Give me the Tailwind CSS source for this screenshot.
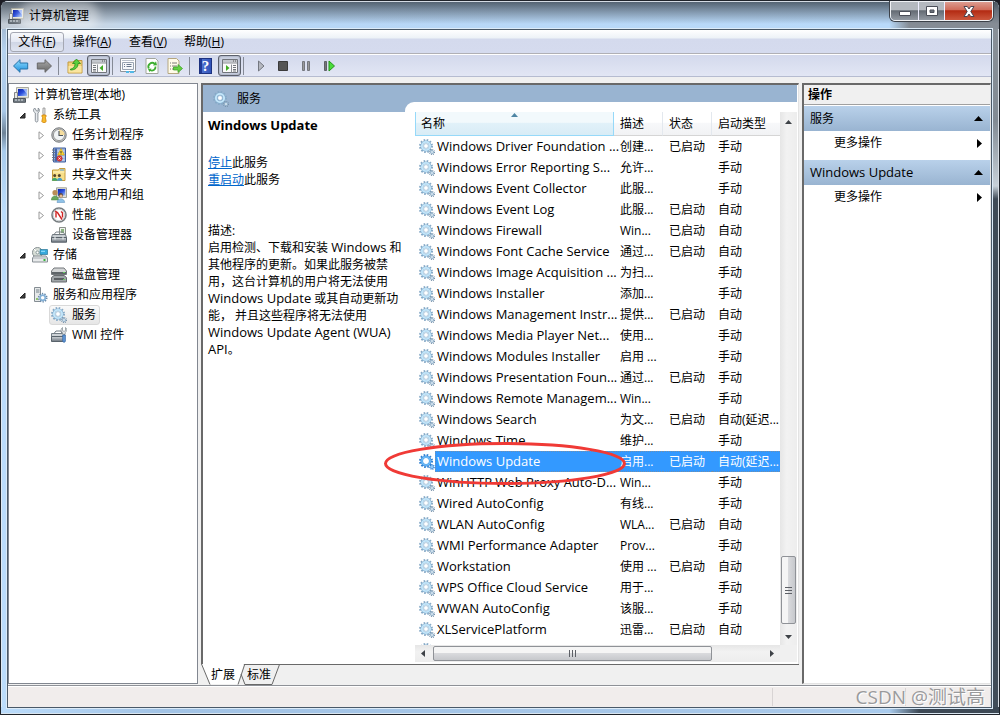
<!DOCTYPE html>
<html lang="zh-CN">
<head>
<meta charset="utf-8">
<title>计算机管理</title>
<script src="https://cdn.jsdelivr.net/npm/@tailwindcss/browser@4"></script>
</head>
<body class="h-screen overflow-hidden bg-[#1c1c24] font-['Open_Sans','Noto_Sans_CJK_SC',sans-serif] text-xs text-black">

<svg class="absolute size-0" aria-hidden="true">
  <defs>
    <linearGradient id="g-scr" x1="0" y1="0" x2="1" y2="1"><stop offset="0" stop-color="#0a1fa8"/><stop offset=".5" stop-color="#2c50dc"/><stop offset="1" stop-color="#a8c8f8"/></linearGradient>
    <linearGradient id="g-blue" x1="0" y1="0" x2="0" y2="1"><stop offset="0" stop-color="#8fdcff"/><stop offset="1" stop-color="#1d8fdd"/></linearGradient>
    <linearGradient id="g-gray" x1="0" y1="0" x2="0" y2="1"><stop offset="0" stop-color="#aaa"/><stop offset="1" stop-color="#666"/></linearGradient>
    <linearGradient id="g-box" x1="0" y1="0" x2="0" y2="1"><stop offset="0" stop-color="#d2d6da"/><stop offset="1" stop-color="#6c757e"/></linearGradient>
  </defs>
  <symbol id="gears" viewBox="0 0 16 16">
    <circle cx="7" cy="7" r="6" fill="none" stroke="#86a9c6" stroke-width="2" stroke-dasharray="1.6 1.54"/>
    <circle cx="7" cy="7" r="4.2" fill="none" stroke="#86b0d0" stroke-width="2.6"/>
    <circle cx="7" cy="7" r="4.1" fill="none" stroke="#c3e6fa" stroke-width="1.9"/>
    <circle cx="7" cy="7" r="2.4" fill="#fff" stroke="#7fa9cb" stroke-width=".6"/>
    <circle cx="13" cy="13" r="2.5" fill="none" stroke="#7892aa" stroke-width="1.2" stroke-dasharray="1 .96"/>
    <circle cx="13" cy="13" r="1.5" fill="#e4f0f8" stroke="#90b0ca" stroke-width="1"/>
  </symbol>
  <symbol id="gears-sel" viewBox="0 0 16 16">
    <circle cx="7" cy="7" r="6" fill="none" stroke="#2f7fd0" stroke-width="2" stroke-dasharray="1.6 1.54"/>
    <circle cx="7" cy="7" r="4.2" fill="none" stroke="#3b8fe0" stroke-width="2.6"/>
    <circle cx="7" cy="7" r="4.1" fill="none" stroke="#70bdf8" stroke-width="1.5"/>
    <circle cx="7" cy="7" r="2.4" fill="#fff"/>
    <circle cx="13" cy="13" r="2.1" fill="#8ec8fa" stroke="#2f7fd0" stroke-width="1.4" stroke-dasharray="1 .7"/>
  </symbol>
  <symbol id="computer" viewBox="0 0 16 16">
    <path d="M3.5.5h12v10.3h-12z" fill="#e4e5dc" stroke="#a9a99e"/>
    <path d="M5 2h9v7H5z" fill="url(#g-scr)"/><path d="M10 2h4v5z" fill="#c7dcff" opacity=".7"/>
    <path d="M1.5 5.500h3v6h-3z" fill="#e7e8e2" stroke="#85878a"/>
    <path d="M.5 11.500h12v3.800H.5z" fill="#717a82" stroke="#4e555c"/><path d="M2 13h2m1 0h2m1 0h2" stroke="#e0e6ea"/>
  </symbol>
  <symbol id="tools" viewBox="0 0 16 16">
    <path d="M2.800 1C1.300 2 1 4.200 2.600 5.500L3.300 6v7.500c0 2 2.600 2 2.600 0V6c2-1.300 1.900-3.800.300-5v3H4.500z" fill="#e9ecef" stroke="#808890" stroke-width=".9"/>
    <path d="M11 1h2v5l-.400 1.500h-1.300L10.800 6z" fill="#e4e4e4" stroke="#888" stroke-width=".7"/>
    <path d="M10 8h4v2l-.600.600.800 3.900c-.800 1.500-3.800 1.500-4.400 0l.800-3.900L10 10z" fill="#f8ba2b" stroke="#ce8310" stroke-width=".8"/>
  </symbol>
  <symbol id="clock" viewBox="0 0 16 16">
    <circle cx="8" cy="8" r="7.2" fill="#c2c4c4" stroke="#74787b"/><circle cx="8" cy="8" r="5.6" fill="#f1f4f5" stroke="#999"/>
    <path d="M8 8V2.400A5.600 5.600 0 0 1 13.600 8z" fill="#f5dd9e"/><path d="M8 4v4.500h4" fill="none" stroke="#4a535b" stroke-width="1.1"/>
  </symbol>
  <symbol id="event" viewBox="0 0 16 16">
    <path d="M2.500 1h12v14h-12z" fill="#9bb3dc" stroke="#3e5f9f"/><path d="M4 1.500h2v13H4z" fill="#4467ae"/>
    <path d="M6.500 4h7m-7 3h7m-7 3h7m-7 3h7" stroke="#dbe7f8"/><path d="M1 3h3M1 5.500h3M1 8h3m-3 2.500h3M1 13h3" stroke="#6c7683"/>
    <path d="M10 1.500 13.400 8H6.700z" fill="#ffdb32" stroke="#c99a08" stroke-width=".6"/><path d="M10 4v2.200m0 .500v.600" stroke="#333"/>
    <circle cx="8.500" cy="11.500" r="2.700" fill="#dd3c3c" stroke="#a81d22" stroke-width=".5"/><path d="m7.500 10.500 2 2m0-2-2 2" stroke="#fff" stroke-width=".8"/>
  </symbol>
  <symbol id="share" viewBox="0 0 16 16">
    <path d="M1.500 3h6l1-1.500h5.500v12H1.500z" fill="#f7df89" stroke="#c59d3c"/><path d="M9 3h4" stroke="#4b9be0"/><path d="M2 5h11.500" stroke="#fff3bf"/>
    <circle cx="3.700" cy="8.500" r="1.500" fill="#57452a"/><circle cx="8.300" cy="8.500" r="1.500" fill="#57452a"/>
    <path d="M.800 13.800c.500-4 5.200-4 5.700 0z" fill="#42a76a"/><path d="M5.800 13.800c.500-4 5.200-4 5.700 0z" fill="#4a9ec9"/>
  </symbol>
  <symbol id="users" viewBox="0 0 16 16">
    <path d="M5.500.800h10v9.700h-10z" fill="#e2e2da" stroke="#a5a59b"/><path d="M6.800 2h7.500v6.500H6.800z" fill="url(#g-scr)"/>
    <circle cx="4" cy="5.700" r="2.600" fill="#b98d56"/><path d="M.300 13c.300-5.500 7-5.500 7.400 0z" fill="#69a75d" stroke="#48833f" stroke-width=".5"/>
    <circle cx="9.700" cy="8.300" r="2.300" fill="#5b4a40"/><circle cx="10" cy="9" r="1.600" fill="#e7b98f"/><path d="M6 15.500c.300-5 7.300-5 7.700 0z" fill="#8fc2e8" stroke="#568db8" stroke-width=".5"/>
  </symbol>
  <symbol id="perf" viewBox="0 0 16 16">
    <circle cx="8" cy="8" r="7" fill="#fff" stroke="#777d80" stroke-width="1.600"/><circle cx="8" cy="8" r="5.700" fill="none" stroke="#cdd1d3"/>
    <path d="m4 4 2.500 1.500 4.500 7M5 10.500V5.200m5-.700 1.500 1.300v4.700" fill="none" stroke="#cf2424" stroke-width="1.400"/>
  </symbol>
  <symbol id="device" viewBox="0 0 16 16">
    <path d="M8.500.500h6v9h-6z" fill="#f0f2ef" stroke="#8a9089"/><path d="M10 2h3v4h-3z" fill="#8ab67c"/>
    <path d="M3 7.500 5 5h7l2 2.500" fill="none" stroke="#7d858b"/><path d="M1.500 7.500h13l1 3H.500z" fill="#c7cdd1" stroke="#727a81"/>
    <path d="M.500 10.500h15v4.700H.500z" fill="url(#g-box)" stroke="#59626a"/><path d="M4 9.500v3m8-3v3" stroke="#edf1f3"/>
  </symbol>
  <symbol id="storage" viewBox="0 0 16 16">
    <circle cx="5.500" cy="5.500" r="5" fill="#d8ded7" stroke="#858e91"/><path d="M5.500 5.500 2 2m3.500 3.500L9 2" stroke="#fff"/><circle cx="5.500" cy="5.500" r="1.500" fill="#fff" stroke="#899"/>
    <path d="M8 2.500h7.500v5H8z" fill="#38a9dc" stroke="#287797" stroke-width=".7"/><path d="M9 4.300h4" stroke="#9be3ff"/>
    <path d="M2 9h12l1.500 2v4h-15v-4z" fill="#e8eaeb" stroke="#899095"/><path d="M1 11h14" stroke="#aab0b5"/><path d="M11.500 12h2v2h-2z" fill="#37b43c"/>
  </symbol>
  <symbol id="disk" viewBox="0 0 16 16">
    <path d="M3 1h10l2.500 3v3.500H.500V4z" fill="#d3d5d6" stroke="#73777a"/><path d="M1 5h14v2H1z" fill="#5f6569"/>
    <path d="M3 8.500h10l2.500 2V15H.500v-4.500z" fill="#a0a5a8" stroke="#686d70"/><path d="M3 12h10" stroke="#44494c" stroke-width="1.500"/><path d="M12 5h2v1h-2zm0 7h2v1h-2z" fill="#64cf5e"/>
  </symbol>
  <symbol id="server" viewBox="0 0 16 16">
    <path d="M2.500.500h6v14h-6z" fill="#e6e9e9" stroke="#858d93"/><path d="M4 3h3.500M4 5h3.500" stroke="#75818a"/><path d="M4 11h2v2H4z" fill="#91c46f"/>
    <circle cx="10.700" cy="10.700" r="4" fill="none" stroke="#6989a8" stroke-width="1.700" stroke-dasharray="1.300 1.210"/><circle cx="10.700" cy="10.700" r="2.600" fill="#fff" stroke="#83b1d8" stroke-width="1.700"/>
  </symbol>
  <symbol id="wmi" viewBox="0 0 16 16">
    <path d="M3 6.500 5 4h5l1 2.500" fill="none" stroke="#707a82"/><path d="M.500 6.500h13v3H.500z" fill="#cdd2d6" stroke="#737d85"/><path d="M.500 9.500h13v5H.500z" fill="url(#g-box)" stroke="#59636b"/>
    <path d="M11.500.500v3l1.500 1 1.500-1v-3c2 1.500 1.400 4-.300 4.800v2h-2.500v-2C9.800 4.500 9.500 2 11.500.500z" fill="#eef0f1" stroke="#7d868c" stroke-width=".7"/>
    <path d="M11.700 8h2.700v6c0 1.700-2.700 1.700-2.700 0z" fill="#5f97d7" stroke="#3566a0" stroke-width=".7"/>
  </symbol>
  <symbol id="pane-l" viewBox="0 0 16 16">
    <path d="M.500 1.500h15v13H.500z" fill="#fafafa" stroke="#71757b"/><path d="M1 2h14v2.500H1z" fill="#c3c7cd"/><path d="M1 5h14M6.500 6.500v8" stroke="#8a8f95"/><path d="M11 3h1m1 0h1" stroke="#555"/>
    <path d="M2 7.500h3M2 9.500h3M2 11.500h3M2 13h3" stroke="#72777d"/><path d="M12 7v6L8.500 10z" fill="#40ac22"/>
  </symbol>
  <symbol id="pane-r" viewBox="0 0 16 16">
    <path d="M.500 1.500h15v13H.500z" fill="#fafafa" stroke="#71757b"/><path d="M1 2h14v2.500H1z" fill="#c3c7cd"/><path d="M1 5h14M9.500 6.500v8" stroke="#8a8f95"/><path d="M11 3h1m1 0h1" stroke="#555"/>
    <path d="M11 7.500h3m-3 2h3m-3 2h3m-3 1.500h3" stroke="#72777d"/><path d="M4 7v6l3.500-3z" fill="#40ac22"/>
  </symbol>
</svg>

<div class="relative flex h-full flex-col overflow-hidden rounded-t-lg border border-[#20242b] bg-[#a9cbec] bg-[linear-gradient(180deg,#8fa0b4_0,#b6d2ef_50px,#a9c8e8_110px,#6e8398_132px,#a9cbec_150px,#bbdcfb_210px,#bbdcfb_100%)] pr-[7px] pb-[6px] pl-[6px] shadow-[inset_0_0_0_1px_#dfe9f2]">
  <div class="absolute top-0 right-0 bottom-0 w-2 border-r border-[#d7dde4] bg-[linear-gradient(180deg,#8b9299_0,#828b94_120px,#c7d0d8_185px,#3f4b57_198px,#414d59_100%)]"></div>
  <div class="absolute right-0 bottom-0 left-0 h-[7px] border-b border-[#d9e5ef] bg-[linear-gradient(90deg,#bbdcfb_0,#a2c3e5_160px,#a8c8e9_80%,#a9cbed_89%,#3d4955_92%)]"></div>

  <header class="relative -mr-[7px] -ml-[6px] flex h-[28px] shrink-0 items-center border-t border-[#d4dbe4] bg-[linear-gradient(180deg,#3b4651cc_0,#4f5b6899_8px,#82a0c000_22px),linear-gradient(90deg,#c3ccd6_0,#c7d6e5_100px,#b7d6f5_170px,#b9dafa_89%,#858c95_91%)] pl-[7px]">
    <svg class="size-4"><use href="#computer"/></svg>
    <h1 class="ml-[3px] rounded-full bg-white/40 px-[2px] shadow-[0_0_9px_8px_#ffffff66]">计算机管理</h1>
    <div class="absolute -top-px right-[6px] flex h-5 overflow-hidden rounded-b-[5px] border border-[#f0f2f5] shadow-[0_0_0_1px_#3c4149]">
      <button aria-label="最小化" class="flex w-7 items-center justify-center border-r border-[#eef] bg-[linear-gradient(180deg,#b4b9bf_45%,#636a73_48%,#9299a2)]"><svg class="mt-1 h-[6px] w-3" viewBox="0 0 12 6"><path d="M.5 1.500h11v4H.5z" fill="#fff" stroke="#4a4e58"/></svg></button>
      <button aria-label="最大化" class="flex w-[26px] items-center justify-center border-r border-[#eef] bg-[linear-gradient(180deg,#b4b9bf_45%,#636a73_48%,#9299a2)]"><svg class="h-[10px] w-3" viewBox="0 0 12 10"><path d="M.5.500h11v9H.5zM4 4v2.500h4V4z" fill="#fff" fill-rule="evenodd" stroke="#4a4e58"/></svg></button>
      <button aria-label="关闭" class="flex w-[47px] items-center justify-center bg-[linear-gradient(180deg,#dc9c90_0,#cf6a58_45%,#b32a12_48%,#cc573d)]"><svg class="h-[11px] w-3" viewBox="0 0 12 11"><path d="M1 .500h3.300L6 3 7.700.500H11L7.800 5.500 11 10.500H7.700L6 8l-1.700 2.500H1l3.200-5z" fill="#fff" stroke="#4a4450"/></svg></button>
    </div>
  </header>

  <main class="relative flex min-h-0 flex-1 flex-col border border-[#4a5968] bg-[#f0f0f0] shadow-[0_0_0_1px_#dcebf8]">
    <nav class="flex h-[24px] shrink-0 items-center border-b border-[#b0b0b5] bg-[linear-gradient(180deg,#fff_0,#edf2f7_8px,#d4daed_9px,#d5dbee)] pl-[2px]">
      <button class="h-5 w-[54px] rounded-[3px] border border-[#a5a8b3] bg-[linear-gradient(180deg,#f6f8fb,#e3e7f2_50%,#d0d6e5_52%,#e0e5f1)]">文件(<u>F</u>)</button>
      <button class="w-14">操作(<u>A</u>)</button>
      <button class="w-14">查看(<u>V</u>)</button>
      <button class="w-14">帮助(<u>H</u>)</button>
    </nav>
    <div class="flex h-[23px] shrink-0 items-center border-b border-[#b6bcd0] border-t border-t-white bg-[linear-gradient(180deg,#d3d9ec,#e2e6f4)] pl-1">
      <button aria-label="后退" class="size-[18px]"><svg viewBox="0 0 18 18"><path d="M1.500 9 8 2.700V6h7.700v6H8v3.300z" fill="url(#g-blue)" stroke="#2773a9"/></svg></button>
      <button aria-label="前进" class="ml-[5px] size-[18px]"><svg viewBox="0 0 18 18"><path d="M16.500 9 10 2.700V6H2.300v6H10v3.300z" fill="url(#g-gray)" stroke="#686868"/></svg></button>
      <span class="mx-[5px] h-[18px] w-px bg-[#858a96]"></span>
      <button aria-label="上一级" class="ml-[3px] size-4"><svg viewBox="0 0 16 16"><path d="M1 4h5l1.500-1.500H15V15H1z" fill="#f3d37a" stroke="#c19a40"/><path d="M1.500 8h13v6.500h-13z" fill="#fae5a0"/><path d="M3.500 11C7 10.500 8 8 8 5.500H5.500L9.500 1l4 4.500H11c0 4-2.500 6.500-7.500 6.500z" fill="#5bcf3d" stroke="#298b1b" stroke-width=".8"/></svg></button>
      <button aria-label="显示/隐藏控制台树" class="ml-1 flex h-[21px] w-[23px] items-center justify-center rounded-[3px] border border-[#5c616c] bg-[#cbd1e1] shadow-[inset_0_0_2px_#7b8293]"><svg class="size-4"><use href="#pane-l"/></svg></button>
      <span class="mx-[2px] h-[18px] w-px bg-[#858a96]"></span>
      <button aria-label="属性" class="ml-[5px] size-4"><svg viewBox="0 0 16 16"><path d="M.500.500h15v13H.500z" fill="#fff" stroke="#8f949b"/><path d="M2 2.500h12" stroke="#bcc3cc"/><path d="M2.500 4.500h11v7h-11z" fill="#f6f8fa" stroke="#9ba5b3"/><path d="M4 6.500h1m1.500 0h5M4 8.500h1m1.500 0h5" stroke="#69788c"/><path d="M6 13h3v2H6zm4 0h4v2h-4z" fill="#52b8e6"/></svg></button>
      <button aria-label="刷新" class="ml-2 size-4"><svg viewBox="0 0 16 16"><path d="M2 .500h9.500L14 3v12.500H2z" fill="#fff" stroke="#a2a69d"/><path d="M4.800 10.500A3.800 3.800 0 0 1 10.800 6" fill="none" stroke="#3fae32" stroke-width="1.800"/><path d="M11.500 8.500A3.600 3.600 0 0 1 6 12" fill="none" stroke="#3fae32" stroke-width="1.800"/><path d="m9 7.500 4-.300-1-4zm-1.500 3L4 11l1.500 3z" fill="#3fae32"/></svg></button>
      <button aria-label="导出列表" class="ml-[7px] size-4"><svg viewBox="0 0 16 16"><path d="M1 .500h8.500L12 3v12.500H1z" fill="#fffbe9" stroke="#b5a780"/><path d="M3 5h1m1 0h5M3 8h1m1 0h5m-7 3h1m1 0h5" stroke="#7c7b74"/><path d="M6.500 9H11V6.500l4.500 4-4.500 4V12H6.500z" fill="#65d141" stroke="#349b23" stroke-width=".7"/></svg></button>
      <span class="mx-[6px] h-[18px] w-px bg-[#858a96]"></span>
      <button aria-label="帮助" class="ml-[3px] flex h-4 w-[13px] items-center justify-center border border-[#1d3280] bg-[linear-gradient(90deg,#203a96_20%,#4d70cf_22%,#3153b8)] font-['Liberation_Serif',serif] text-[15px] leading-4 font-bold text-white">?</button>
      <button aria-label="显示/隐藏操作窗格" class="ml-[6px] flex h-[21px] w-[23px] items-center justify-center rounded-[3px] border border-[#5c616c] bg-[#cbd1e1] shadow-[inset_0_0_2px_#7b8293]"><svg class="size-4"><use href="#pane-r"/></svg></button>
      <span class="mx-[2px] h-[18px] w-px bg-[#858a96]"></span>
      <button aria-label="启动服务" class="ml-[7px] size-4"><svg viewBox="0 0 16 16"><path d="M5.500 3v10l5.500-5z" fill="#b5b8c0" stroke="#737780"/></svg></button>
      <button aria-label="停止服务" class="ml-[6px] size-4"><svg viewBox="0 0 16 16"><path d="M3.500 3.500h9v9h-9z" fill="#555" stroke="#3b3b3b"/></svg></button>
      <button aria-label="暂停服务" class="ml-[7px] size-4"><svg viewBox="0 0 16 16"><path d="M4.500 3.500h2v9h-2zm5 0h2v9h-2z" fill="#999" stroke="#74777e"/></svg></button>
      <button aria-label="重启动服务" class="ml-[7px] size-4"><svg viewBox="0 0 16 16"><path d="M3.500 3.500h2v9h-2z" fill="#777" stroke="#5e6168"/><path d="M8 3v10l5.500-5z" fill="#49dc39" stroke="#23961b"/></svg></button>
    </div>

    <div class="flex min-h-0 flex-1 gap-[3px] pt-[6px]">
      <aside class="w-[190px] shrink-0 border border-[#828790] bg-white pt-px">
        <ul id="tree"></ul>
      </aside>

      <section class="relative flex min-w-0 flex-1 flex-col">
        <div class="flex min-h-0 flex-1 flex-col border-t-2 border-r border-l-2 border-[#696969] border-r-[#e3e3e3] bg-white pr-px">
          <div class="flex h-[27px] shrink-0 bg-[#99b4d1]">
            <div class="flex w-[202px] shrink-0 items-center pl-[10px]"><svg class="size-4"><use href="#gears"/></svg><h2 class="ml-2">服务</h2></div>
            <div class="mt-[17px] h-[10px] flex-1 rounded-tl-[9px] bg-white"></div>
          </div>
          <div class="flex min-h-0 flex-1">
            <div class="w-[212px] shrink-0 pt-[5px] pl-[5px] leading-[17px] whitespace-nowrap">
              <h3 class="text-[13px] font-bold">Windows Update</h3>
              <p class="mt-5"><a href="#" class="text-[#0066cc] underline">停止</a>此服务<br><a href="#" class="text-[#0066cc] underline">重启动</a>此服务</p>
              <p class="mt-[34px]">描述:<br>启用检测、下载和安装 <span class="text-[13px]">Windows</span> 和<br>其他程序的更新。如果此服务被禁<br>用，这台计算机的用户将无法使用<br><span class="text-[13px]">Windows Update</span> 或其自动更新功<br>能， 并且这些程序将无法使用<br><span class="text-[13px]">Windows Update Agent (WUA)</span><br><span class="text-[13px]">API</span>。</p>
            </div>
            <div class="flex min-w-0 flex-1 flex-col">
              <div class="flex min-h-0 flex-1">
                <div class="min-w-0 flex-1 overflow-hidden">
                  <table class="w-full table-fixed border-separate border-spacing-0">
                    <colgroup><col class="w-[199px]"><col class="w-[49px]"><col class="w-[49px]"><col></colgroup>
                    <thead>
                      <tr class="h-[24px] text-left">
                        <th class="relative border-r border-b border-l border-[#96d9f9] bg-[linear-gradient(180deg,#f2f9fc_45%,#e1f1f9_48%,#d8ecf6)] pl-[5px] font-normal">名称<svg class="absolute top-[1px] left-[95px] h-1 w-[7px]" viewBox="0 0 7 4"><path d="M0 4 3.500 0 7 4z" fill="#4f86a4"/></svg></th>
                        <th class="border-r border-b border-[#d5d5d5] border-r-[#e3e8ee] bg-[linear-gradient(180deg,#fff_45%,#f7f8fa_48%,#f1f2f4)] pl-[6px] font-normal">描述</th>
                        <th class="border-r border-b border-[#d5d5d5] border-r-[#e3e8ee] bg-[linear-gradient(180deg,#fff_45%,#f7f8fa_48%,#f1f2f4)] pl-[6px] font-normal">状态</th>
                        <th class="border-b border-[#d5d5d5] bg-[linear-gradient(180deg,#fff_45%,#f7f8fa_48%,#f1f2f4)] pl-[6px] font-normal whitespace-nowrap">启动类型</th>
                      </tr>
                    </thead>
                    <tbody id="rows"></tbody>
                  </table>
                </div>
                <div class="flex w-[17px] shrink-0 flex-col items-center bg-[linear-gradient(90deg,#e6e6e6,#f2f2f2_40%,#ededed)] py-[6px]">
                  <svg class="mt-[2px] h-[4px] w-[7px]" viewBox="0 0 7 4"><path d="M0 4 3.500 0 7 4z" fill="#3e4247"/></svg>
                  <div class="mt-auto flex h-[68px] w-[15px] items-center justify-center rounded-[2px] border border-[#8f9297] bg-[linear-gradient(90deg,#f5f5f5_45%,#d9dadd_50%,#c6c8cc)]"><svg class="h-2 w-[7px]" viewBox="0 0 7 8"><path d="M0 1.500h7m-7 3h7m-7 3h7" stroke="#5d6066"/></svg></div>
                  <svg class="mt-[11px] h-[4px] w-[7px]" viewBox="0 0 7 4"><path d="M0 0h7L3.500 4z" fill="#3e4247"/></svg>
                </div>
              </div>
              <div class="flex h-[17px] shrink-0 bg-[#f0f0f0]">
                <div class="flex min-w-0 flex-1 items-center bg-[linear-gradient(180deg,#e6e6e6,#f2f2f2_40%,#ededed)] px-[6px]">
                  <svg class="h-[7px] w-1" viewBox="0 0 4 7"><path d="M4 0v7L0 3.500z" fill="#3e4247"/></svg>
                  <div class="ml-2 flex h-[15px] w-[79%] items-center justify-center rounded-[2px] border border-[#8f9297] bg-[linear-gradient(180deg,#f5f5f5_45%,#d9dadd_50%,#c6c8cc)]"><svg class="h-[7px] w-2" viewBox="0 0 8 7"><path d="M1.500 0v7m3-7v7m3-7v7" stroke="#5d6066"/></svg></div>
                  <svg class="ml-auto h-[7px] w-1" viewBox="0 0 4 7"><path d="M0 0v7l4-3.500z" fill="#3e4247"/></svg>
                </div>
                <div class="w-[17px]"></div>
              </div>
              <div class="h-[2px] shrink-0 bg-white"></div>
            </div>
          </div>
        </div>
        <div class="relative flex h-[20px] shrink-0 items-center border-t border-[#696969] pl-2">
          <svg class="absolute -top-px left-0 h-[21px] w-20" viewBox="0 0 80 21"><path d="M0 0h43L37 20H9z" fill="#fff"/><path d="M.500 0 9 20.500m28 0L43.500 1M40 10l4 10.500h27L78.500.500" fill="none" stroke="#696969"/></svg>
          <button class="relative w-7">扩展</button><button class="relative ml-2 w-7">标准</button>
        </div>
        <svg class="pointer-events-none absolute top-[358px] left-[182px] h-[46px] w-[244px]" viewBox="0 0 244 46"><ellipse cx="122" cy="22.500" rx="119.500" ry="20" fill="none" stroke="#f03a36" stroke-width="3"/></svg>
      </section>

      <aside class="w-[189px] shrink-0 border-t-2 border-r border-b border-l-2 border-[#696969] border-r-[#e3e3e3] border-b-[#e3e3e3] bg-white">
        <h2 class="flex h-[20px] items-center border-b border-[#a0a0a0] bg-[#f0f0f0] pl-1 font-bold">操作</h2>
        <div class="mt-px flex h-[25px] items-center justify-between bg-[linear-gradient(180deg,#b9d1ea,#99b4d1)] pr-[7px] pl-[6px]"><h3>服务</h3><svg class="h-[5px] w-[9px]" viewBox="0 0 9 5"><path d="M0 5 4.500 0 9 5z"/></svg></div>
        <button class="flex h-[24px] w-full items-center justify-between pr-2 pl-[30px]">更多操作<svg class="h-[9px] w-[5px]" viewBox="0 0 5 9"><path d="M0 0v9l5-4.500z"/></svg></button>
        <div class="mt-[5px] flex h-[25px] items-center justify-between bg-[linear-gradient(180deg,#b9d1ea,#99b4d1)] pr-[7px] pl-[6px]"><h3 class="text-[13px]">Windows Update</h3><svg class="h-[5px] w-[9px]" viewBox="0 0 9 5"><path d="M0 5 4.500 0 9 5z"/></svg></div>
        <button class="flex h-[24px] w-full items-center justify-between pr-2 pl-[30px]">更多操作<svg class="h-[9px] w-[5px]" viewBox="0 0 5 9"><path d="M0 0v9l5-4.500z"/></svg></button>
      </aside>
    </div>

    <footer class="relative mt-px flex h-[22px] shrink-0 items-center justify-end border-t border-[#8e9197] bg-[#f1edec] shadow-[inset_0_1px_0_#fff]">
      <span class="h-[18px] w-[133px] border-l border-[#d8d4d4]"></span><span class="h-[18px] w-[86px] border-x border-[#d8d4d4]"></span>
      <p class="absolute right-[6px] text-[19px] leading-5 whitespace-nowrap text-[#9a9a9c] [text-shadow:1px_1px_0_#fff]">CSDN @测试高</p>
    </footer>
  </main>
</div>

<script>
const tree = [
  [0, '', 'computer', '计算机管理(本地)'], [1, 'open', 'tools', '系统工具'],
  [2, 'closed', 'clock', '任务计划程序'], [2, 'closed', 'event', '事件查看器'],
  [2, 'closed', 'share', '共享文件夹'], [2, 'closed', 'users', '本地用户和组'],
  [2, 'closed', 'perf', '性能'], [2, '', 'device', '设备管理器'],
  [1, 'open', 'storage', '存储'], [2, '', 'disk', '磁盘管理'],
  [1, 'open', 'server', '服务和应用程序'], [2, '', 'gears', '服务'], [2, '', 'wmi', 'WMI 控件']
];
const pads = ['pl-[3px]', 'pl-2', 'pl-[27px]'];
const arrows = {
  open: '<svg class="size-[7px]" viewBox="0 0 7 7"><path d="M6 1v5H1z" fill="#404040" stroke="#222"/></svg>',
  closed: '<svg class="h-[9px] w-[7px]" viewBox="0 0 7 9"><path d="M1 .800v7.400L5.500 4.500z" fill="#fff" stroke="#999"/></svg>',
  '': ''
};
document.getElementById('tree').innerHTML = tree.map(([d, a, icon, label]) => {
  const box = label === '服务'
    ? 'flex h-5 items-center rounded-[3px] border border-[#d9d9d9] bg-[linear-gradient(180deg,#fafafa,#e6e6e6)] pr-[3px] -ml-px'
    : 'flex h-5 items-center';
  const arrow = d ? `<span class="flex w-[14px] shrink-0 items-center pl-[2px]">${arrows[a]}</span>` : '';
  return `<li class="flex h-5 items-center whitespace-nowrap ${pads[d]}">${arrow}<span class="${box}"><svg class="size-4 mx-px"><use href="#${icon}"/></svg><span class="ml-1">${label}</span></span></li>`;
}).join('');

const on = '已启动', M = '手动', A = '自动';
const services = [
  ['Windows Driver Foundation ...', '创建...', on, M], ['Windows Error Reporting S...', '允许...', '', M],
  ['Windows Event Collector', '此服...', '', M], ['Windows Event Log', '此服...', on, A],
  ['Windows Firewall', 'Win...', on, A], ['Windows Font Cache Service', '通过...', on, A],
  ['Windows Image Acquisition ...', '为扫...', '', M], ['Windows Installer', '添加...', '', M],
  ['Windows Management Instr...', '提供...', on, A], ['Windows Media Player Net...', '使用...', '', M],
  ['Windows Modules Installer', '启用 ...', '', M], ['Windows Presentation Foun...', '通过...', on, M],
  ['Windows Remote Managem...', 'Win...', '', M], ['Windows Search', '为文...', on, '自动(延迟...'],
  ['Windows Time', '维护...', '', M], ['Windows Update', '启用...', on, '自动(延迟...'],
  ['WinHTTP Web Proxy Auto-D...', 'Win...', '', M], ['Wired AutoConfig', '有线...', '', M],
  ['WLAN AutoConfig', 'WLA...', on, A], ['WMI Performance Adapter', 'Prov...', '', M],
  ['Workstation', '使用 ...', on, A], ['WPS Office Cloud Service', '用于...', '', M],
  ['WWAN AutoConfig', '该服...', '', M], ['XLServicePlatform', '迅雷...', on, A], ['', '', '', '']
];
document.getElementById('rows').innerHTML = services.map(([n, d, s, t]) => {
  const sel = n === 'Windows Update';
  const cell = sel ? 'h-[21px] bg-[#3399ff] p-0 pl-[6px] text-white border-y border-dotted border-[#6f8fae]' : 'h-[21px] p-0 pl-[6px]';
  const name = sel ? 'flex h-[21px] flex-1 items-center border-y border-l border-dotted border-[#6f8fae] bg-[#3399ff] pl-px text-white' : 'pl-[2px]';
  return `<tr class="h-[21px] whitespace-nowrap"><td class="h-[21px] p-0"><div class="flex h-[21px] items-center pl-1 text-[13px]"><svg class="size-4 shrink-0"><use href="#${sel ? 'gears-sel' : 'gears'}"/></svg><span class="${name}">${n}</span></div></td><td class="${cell}">${d}</td><td class="${cell}">${s}</td><td class="${cell}">${t}</td></tr>`;
}).join('');
</script>
</body>
</html>
